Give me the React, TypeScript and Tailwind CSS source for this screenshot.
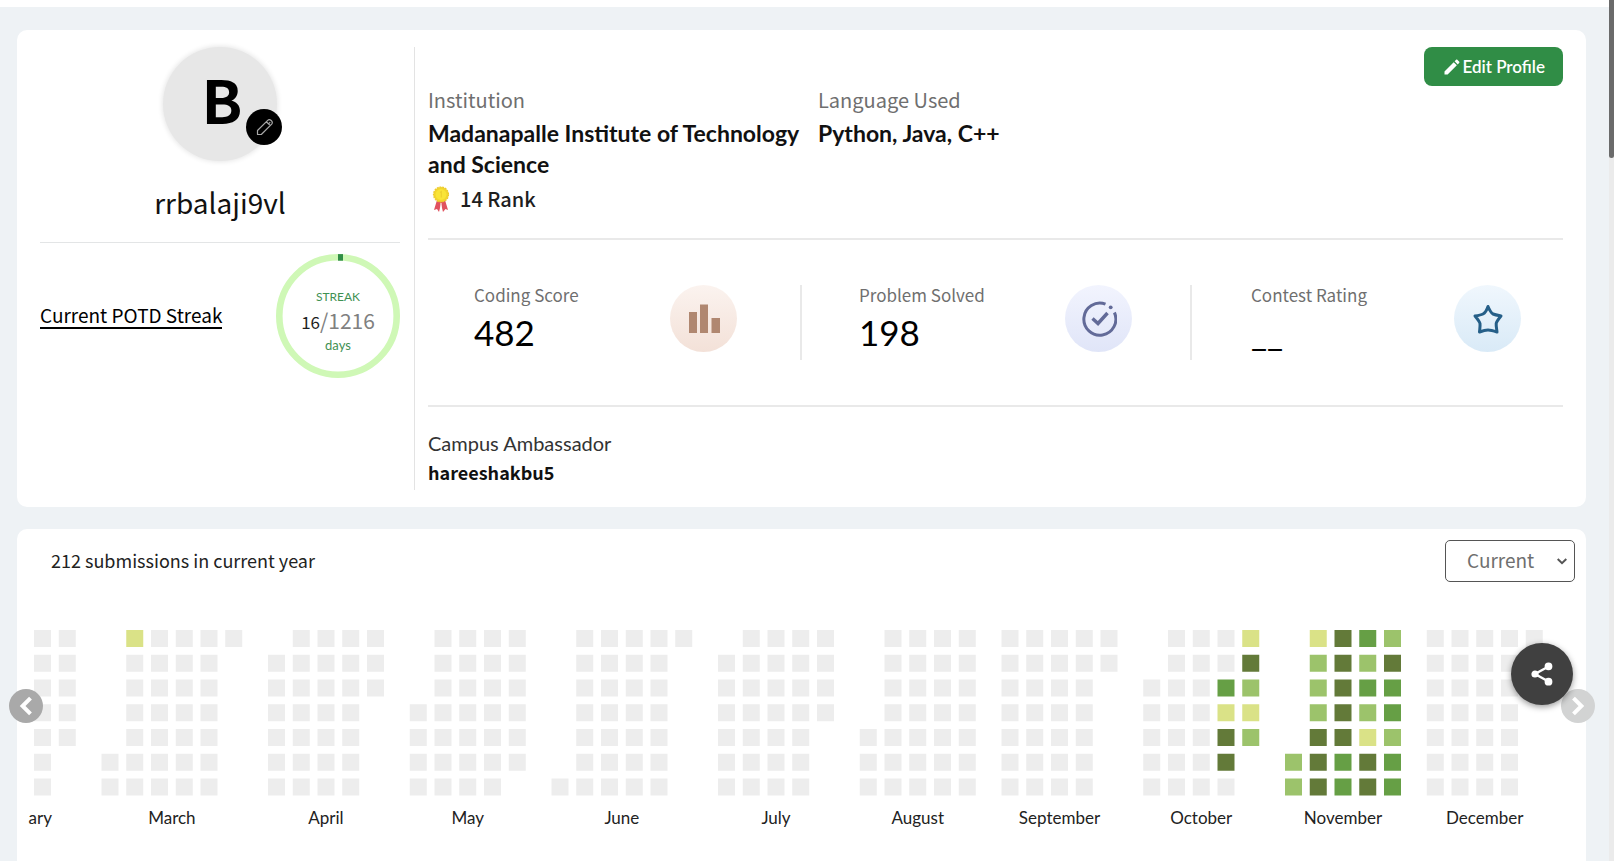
import type { ReactNode } from "react";

const SANS = "font-['Noto_Sans_CJK_SC','Noto_Sans',sans-serif]";
const ROUND = "font-[Lato,'Open_Sans',sans-serif]";

type Month = { label: string; start: number; days: number; levels?: Record<number, number> };

const LEVEL_COLORS = ["#ededed", "#dae287", "#9cc36b", "#669f45", "#637a39"];

const MONTHS: Month[] = [
  { label: "March", start: 5, days: 31, levels: { 3: 1 } },
  { label: "April", start: 1, days: 30 },
  { label: "May", start: 3, days: 31 },
  { label: "June", start: 6, days: 30 },
  { label: "July", start: 1, days: 31 },
  { label: "August", start: 4, days: 31 },
  { label: "September", start: 0, days: 30 },
  {
    label: "October",
    start: 2,
    days: 31,
    levels: { 22: 3, 23: 1, 24: 4, 25: 4, 27: 1, 28: 4, 29: 2, 30: 1, 31: 2 },
  },
  {
    label: "November",
    start: 5,
    days: 30,
    levels: {
      1: 2, 2: 2,
      3: 1, 4: 2, 5: 2, 6: 2, 7: 4, 8: 4, 9: 4,
      10: 4, 11: 4, 12: 4, 13: 4, 14: 4, 15: 3, 16: 3,
      17: 3, 18: 2, 19: 3, 20: 2, 21: 1, 22: 4, 23: 4,
      24: 2, 25: 4, 26: 3, 27: 3, 28: 2, 29: 3, 30: 3,
    },
  },
  { label: "December", start: 0, days: 31 },
];

const PITCH = 24.75;
const CELL = 17;
const MONTH_GAP = 18;

function MonthCells({ month, x }: { month: Month; x: number }) {
  return (
    <>
      {Array.from({ length: month.days }, (_, i) => {
        const slot = month.start + i;
        return (
          <rect
            key={i}
            x={x + Math.floor(slot / 7) * PITCH}
            y={(slot % 7) * PITCH + 1}
            width={CELL}
            height={CELL}
            fill={LEVEL_COLORS[month.levels?.[i + 1] ?? 0]}
          />
        );
      })}
    </>
  );
}

function Heatmap() {
  let x = 74.5;
  const placed = MONTHS.map((month) => {
    const at = x;
    const cols = Math.ceil((month.start + month.days) / 7);
    x += cols * PITCH + MONTH_GAP;
    return { month, at, center: at + (cols * PITCH - (PITCH - CELL)) / 2 };
  });
  return (
    <svg className="block h-[210px] w-full overflow-hidden" role="img" aria-label="Submission activity">
      <MonthCells month={{ label: "February", start: 4, days: 29 }} x={-67.25} />
      <text x={25} y={195} textAnchor="end" className={`${ROUND} fill-[#222] text-[17px]`}>ary</text>
      {placed.map(({ month, at, center }) => (
        <g key={month.label}>
          <MonthCells month={month} x={at} />
          <text x={center} y={195} textAnchor="middle" className={`${ROUND} fill-[#222] text-[17px]`}>
            {month.label}
          </text>
        </g>
      ))}
    </svg>
  );
}

function Stat({ label, value, pad, circle, children }: { label: string; value: string; pad: string; circle: string; children: ReactNode }) {
  return (
    <div className={`flex h-[75px] justify-between ${pad}`}>
      <div>
        <div className={`${SANS} text-[17px] leading-5 text-[#6f6f6f]`}>{label}</div>
        <div className={`${ROUND} text-[35px] leading-[54px] text-black`}>{value}</div>
      </div>
      <div className={`flex size-[67px] items-center justify-center rounded-full bg-linear-to-b ${circle}`}>{children}</div>
    </div>
  );
}

function Medal() {
  return (
    <svg width="18" height="26" viewBox="0 0 18 26" aria-hidden="true">
      <path d="M5 14 L2 24 L5 23 L7 26 L9 18 L11 26 L13.500 23 L16 24 L13 14Z" fill="#e0525f" />
      <path d="M9 17 V23" stroke="#fff" strokeWidth="1" />
      <circle cx="9" cy="8.500" r="7.500" fill="#f2d52e" stroke="#ecc92f" strokeWidth="1.200" strokeDasharray="1.800 1" />
      <circle cx="9" cy="8.500" r="5.400" fill="#f9e437" />
      <path d="M8 6.500 L9.300 5.600 V11.500" stroke="#edd02f" strokeWidth="1.200" fill="none" />
    </svg>
  );
}

export default function App() {
  return (
    <div className="flex h-screen overflow-hidden bg-[#eef2f5]">
      <main className="relative flex min-w-0 flex-1 flex-col">
        <div className="h-[7px] shrink-0 bg-white" />
        <section className="mt-[23px] mr-[23px] ml-[17px] flex shrink-0 rounded-[10px] bg-white py-[17px] pr-[23px] pl-[23px]">
          <div className="flex w-[375px] shrink-0 flex-col border-r border-[#e3e3e3] pr-[14px]">
            <div className="flex flex-col items-center border-b border-[#e3e5e6] pb-5">
              <div className="relative flex size-[114px] items-center justify-center rounded-full bg-[#e7e7e7] shadow-[0_0_5px_1px_#e7e7e7]">
                <span className={`${SANS} pb-3 pl-1 text-[60px] leading-none font-bold text-black`}>B</span>
                <button aria-label="Change picture" className="absolute -right-[5px] bottom-4 flex size-9 items-center justify-center rounded-full bg-black">
                  <svg width="18" height="18" viewBox="0 0 18 18" fill="none" stroke="#a8a8a8" strokeWidth="1.200" strokeLinejoin="round" className="ml-0.5" aria-hidden="true">
                    <path d="M1.500 16.500 V12.500 L11.700 2.300 C13.800 .2 17.600 3.700 15.700 6.100 L5.300 16.500 Z M10.300 3.700 L14.300 7.600 M12.500 5.900 L14.200 4.100" />
                  </svg>
                </button>
              </div>
              <h1 className={`${SANS} mt-[21px] text-[28px] leading-10 text-[#111]`}>rrbalaji9vl</h1>
            </div>
            <div className="mt-[11px] flex items-center justify-between">
              <a href="#potd" className={`${SANS} border-b-2 border-black text-[19px] leading-6 text-black`}>Current POTD Streak</a>
              <div className="relative flex size-[124px] flex-col items-center justify-center pt-[10px]">
                <svg className="absolute inset-0" width="124" height="124" viewBox="0 0 124 124" fill="none" aria-hidden="true">
                  <circle cx="62" cy="62" r="58.700" stroke="#cff8b6" strokeWidth="6.600" />
                  <path d="M62 3.400 H67" stroke="#308d46" strokeWidth="6.600" />
                </svg>
                <div className={`${ROUND} text-[12px] leading-4 text-[#3f9153]`}>STREAK</div>
                <div className={`${SANS} text-[21px] leading-[30px] text-[#808080]`}>
                  <span className="text-[17px] text-[#1e1e1e]">16</span>/1216
                </div>
                <div className={`${ROUND} text-[13px] leading-4 text-[#3f9153]`}>days</div>
              </div>
            </div>
          </div>

          <div className="min-w-0 flex-1 pl-[13px]">
            <div className="flex justify-end">
              <button className={`${ROUND} flex h-[39px] items-center rounded-lg bg-[#308d46] pr-[18px] pl-[18px] text-[17px] font-semibold text-white`}>
                <svg width="20" height="20" viewBox="0 0 24 24" fill="currentColor" aria-hidden="true">
                  <path d="M3 17.250V21h3.750L17.810 9.940l-3.750-3.750L3 17.250zM20.710 7.040c.39-.39.39-1.020 0-1.410l-2.340-2.340c-.39-.39-1.020-.39-1.410 0l-1.830 1.830 3.750 3.750 1.830-1.830z" />
                </svg>
                Edit Profile
              </button>
            </div>
            <div className="flex">
              <div className="w-[390px] shrink-0">
                <div className={`${SANS} pb-1 text-[20px] leading-7 text-[#6f6f6f]`}>Institution</div>
                <div className={`${ROUND} text-[23px] leading-[31px] font-bold text-[#111]`}>Madanapalle Institute of Technology and Science</div>
                <div className="mt-[3px] flex items-center gap-[10px] pl-1">
                  <Medal />
                  <span className={`${SANS} text-[20px] leading-8 font-medium text-[#1e1e1e]`}>14 Rank</span>
                </div>
              </div>
              <div>
                <div className={`${SANS} pb-1 text-[20px] leading-7 text-[#6f6f6f]`}>Language Used</div>
                <div className={`${ROUND} text-[23px] leading-[31px] font-bold text-[#111]`}>Python, Java, C++</div>
              </div>
            </div>
            <div className="mt-[23px] grid grid-cols-[374fr_390fr_371fr] border-y-2 border-[#e9e9e9] pt-[45px] pb-[45px]">
              <Stat label="Coding Score" value="482" pad="border-r-2 border-[#e9e9e9] pr-[63px] pl-[46px]" circle="from-[#fbf3ef] to-[#f3e1d8]">
                <svg width="32" height="30" viewBox="0 0 32 30" fill="#b08770" aria-hidden="true">
                  <path d="M1 8h8v21h-8zM12 .5h8V29h-8zM23.500 14h8.500v15h-8.500z" />
                </svg>
              </Stat>
              <Stat label="Problem Solved" value="198" pad="border-r-2 border-[#e9e9e9] pr-[58px] pl-[57px]" circle="from-[#f2f4fe] to-[#e0e5f8]">
                <svg width="36" height="36" viewBox="0 0 36 36" fill="none" stroke="#626a98" strokeWidth="3" aria-hidden="true">
                  <path d="M24.500 3.200 A16 16 0 1 0 33.400 11.500" />
                  <path d="M11.500 17.500 L17 22.500 L26.500 12" strokeWidth="3.400" />
                  <circle cx="29.700" cy="6.300" r="1.900" fill="#626a98" stroke="none" />
                </svg>
              </Stat>
              <Stat label="Contest Rating" value="__" pad="pr-[42px] pl-[59px]" circle="from-[#f0f7fd] to-[#d9eaf7]">
                <svg width="32" height="32" viewBox="0 0 32 32" fill="none" stroke="#255f88" strokeWidth="3" strokeLinejoin="round" aria-hidden="true">
                  <path d="M16 3.500 C17.500 7 19.500 10 21 11 C23.500 12 27 12.600 29 13 C26.500 16 24.500 18.500 24.200 20.500 C24 23 24.800 26.500 25 29 C20.500 27.500 18 27 16 27 C14 27 11.500 27.500 7.500 29 C7.700 26.500 8.300 23 8 20.500 C7.500 18.500 5.500 16 3 13 C5.500 12.600 9 12 11 11 C13 10 14.800 7 16 3.500Z" />
                </svg>
              </Stat>
            </div>
            <div className="pt-[21px]">
              <div className={`${ROUND} text-[20px] leading-[30px] text-[#333]`}>Campus Ambassador</div>
              <div className={`${SANS} pb-1 text-[18px] leading-7 font-bold text-[#111]`}>hareeshakbu5</div>
            </div>
          </div>
        </section>

        <section className="relative mt-[22px] mr-[23px] ml-[17px] min-h-0 flex-1 rounded-t-[10px] bg-white">
          <div className="flex items-center justify-between pt-[11px] pr-[11px] pl-[34px]">
            <h2 className={`${SANS} pb-0.5 text-[18px] leading-7 text-[#222]`}>212 submissions in current year</h2>
            <div className="relative">
              <select aria-label="Year" className={`${SANS} h-[42px] w-[130px] appearance-none rounded-[5px] border border-[#555] bg-white pb-0.5 pl-[21px] text-[19px] leading-7 text-[#6f6f6f]`}>
                <option>Current</option>
              </select>
              <svg className="pointer-events-none absolute top-[18px] right-2" width="10" height="7" viewBox="0 0 10 7" fill="none" stroke="#555" strokeWidth="2" aria-hidden="true">
                <path d="M.7 1 L5 5.200 L9.300 1" />
              </svg>
            </div>
          </div>
          <div className="mt-[47px] pr-6 pl-[10px]">
            <Heatmap />
          </div>
          <button aria-label="Previous months" className="absolute top-[160px] -left-2 flex size-[34px] items-center justify-center rounded-full bg-[#a9a9a9]">
            <svg width="14" height="20" viewBox="0 0 14 20" fill="none" stroke="#fff" strokeWidth="4" aria-hidden="true">
              <path d="M11.500 2.200 L3.600 10 L11.500 17.800" />
            </svg>
          </button>
          <button aria-label="Next months" className="absolute top-[160px] -right-[9px] flex size-[34px] items-center justify-center rounded-full bg-[#d2d3d3]">
            <svg width="14" height="20" viewBox="0 0 14 20" fill="none" stroke="#fff" strokeWidth="4" aria-hidden="true">
              <path d="M2.500 2.200 L10.400 10 L2.500 17.800" />
            </svg>
          </button>
          <button aria-label="Share" className="absolute top-[114px] right-[13px] flex size-[62px] items-center justify-center rounded-full bg-[#404040] shadow-[0_2px_6px_rgba(0,0,0,0.4)]">
            <svg width="22" height="24" viewBox="0 0 22 24" fill="#fff" stroke="#fff" strokeWidth="2.400" aria-hidden="true">
              <path d="M17.500 4.500 L4 12 L17.500 19.500" fill="none" />
              <circle cx="17.500" cy="4.300" r="2.700" />
              <circle cx="4" cy="12" r="2.400" />
              <circle cx="17.500" cy="19.700" r="2.700" />
            </svg>
          </button>
        </section>
      </main>
      <div className="w-[5px] shrink-0 bg-[#ebebeb]">
        <div className="h-[158px] rounded-b-sm bg-[#6b6b6b]" />
      </div>
    </div>
  );
}
